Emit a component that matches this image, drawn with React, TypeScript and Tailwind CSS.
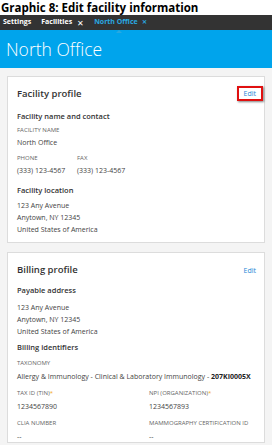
import React from "react";

const Label = ({ children, req }: { children: React.ReactNode; req?: boolean }) => (
  <div className="text-[6px] leading-[8px] uppercase text-[#666]">
    {children}
    {req && <span className="text-[#f5a623]">*</span>}
  </div>
);

const Value = ({ children }: { children: React.ReactNode }) => (
  <div className="text-[7px] leading-[12px] text-[#444]">{children}</div>
);

const SubHead = ({ children }: { children: React.ReactNode }) => (
  <div className="text-[7.5px] leading-[12px] font-semibold text-[#333]">{children}</div>
);

export default function App() {
  return (
    <div className="w-[272px] h-[445px] bg-white overflow-hidden font-['Open_Sans',sans-serif]">
      {/* caption */}
      <div className="h-[15px] pl-[1px] text-[11.5px] leading-[15px] font-bold text-black whitespace-nowrap">
        Graphic 8: Edit facility information
      </div>

      {/* tabs */}
      <div className="h-[15px] bg-[#333] flex items-center text-[7px] font-bold text-white gap-[10px] pl-[3px]">
        <span>Settings</span>
        <span className="flex items-center gap-[5px]">
          Facilities <span className="font-normal text-[8px]">✕</span>
        </span>
        <span className="relative flex items-center gap-[4px] text-[#29a8e0]">
          North Office <span className="text-[6px] font-bold">✕</span>
          <span className="absolute left-[22px] -bottom-[5px] w-0 h-0 border-l-[3px] border-r-[3px] border-b-[3px] border-l-transparent border-r-transparent border-b-[#29a8e0]" />
        </span>
      </div>

      {/* header */}
      <div className="h-[38px] bg-[#00a4ec] flex items-center pl-[6px]">
        <span className="text-[17.5px] leading-[24px] font-light text-white">North Office</span>
      </div>

      {/* body */}
      <div className="bg-[#f4f4f4] pt-[8px] px-[7px] pb-[4px] flex flex-col gap-[9px]">
        {/* facility profile */}
        <div className="bg-white border border-[#dcdcdc] pl-[9px] pr-[1px] pt-[8px] pb-[8px] h-[167px]">
          <div className="flex items-center justify-between">
            <div className="text-[9.5px] leading-[14px] font-semibold text-[#333] mt-[2px]">Facility profile</div>
            <div className="border-[2px] border-[#e01010] px-[5px] py-[1px] text-[7px] leading-[9px] text-[#1e88d6] shadow-[1px_1px_2px_rgba(0,0,0,0.5)]">
              Edit
            </div>
          </div>
          <div className="mt-[9px]"><SubHead>Facility name and contact</SubHead></div>
          <div className="mt-[4px]"><Label>Facility name</Label></div>
          <div className="mt-[3px]"><Value>North Office</Value></div>
          <div className="mt-[5px] flex">
            <div className="w-[60px]">
              <Label>Phone</Label>
              <div className="mt-[3px]"><Value>(333) 123-4567</Value></div>
            </div>
            <div>
              <Label>Fax</Label>
              <div className="mt-[3px]"><Value>(333) 123-4567</Value></div>
            </div>
          </div>
          <div className="mt-[7px]"><SubHead>Facility location</SubHead></div>
          <div className="mt-[4px]">
            <Value>123 Any Avenue</Value>
            <Value>Anytown, NY 12345</Value>
            <Value>United States of America</Value>
          </div>
        </div>

        {/* billing profile */}
        <div className="bg-white border border-[#dcdcdc] pl-[9px] pr-[8px] pt-[10px] pb-[6px] h-[191px]">
          <div className="flex items-center justify-between">
            <div className="text-[9.5px] leading-[14px] font-semibold text-[#333]">Billing profile</div>
            <div className="text-[7px] leading-[9px] text-[#1e88d6]">Edit</div>
          </div>
          <div className="mt-[7px]"><SubHead>Payable address</SubHead></div>
          <div className="mt-[6px]">
            <Value>123 Any Avenue</Value>
            <Value>Anytown, NY 12345</Value>
            <Value>United States of America</Value>
          </div>
          <div className="mt-[3px]"><SubHead>Billing identifiers</SubHead></div>
          <div className="mt-[6px]"><Label>Taxonomy</Label></div>
          <div className="mt-[4px] whitespace-nowrap">
            <Value>
              Allergy &amp; Immunology - Clinical &amp; Laboratory Immunology - <b className="text-[#222]">207KI0005X</b>
            </Value>
          </div>
          <div className="mt-[6px] grid grid-cols-[132px_1fr]">
            <div>
              <Label req>Tax ID (TIN)</Label>
              <div className="mt-[4px]"><Value>1234567890</Value></div>
              <div className="mt-[6px]"><Label>CLIA number</Label></div>
              <div className="mt-[4px]"><Value>--</Value></div>
            </div>
            <div>
              <Label req>NPI (Organization)</Label>
              <div className="mt-[4px]"><Value>1234567893</Value></div>
              <div className="mt-[6px]"><Label>Mammography certification ID</Label></div>
              <div className="mt-[4px]"><Value>--</Value></div>
            </div>
          </div>
        </div>
      </div>
    </div>
  );
}
